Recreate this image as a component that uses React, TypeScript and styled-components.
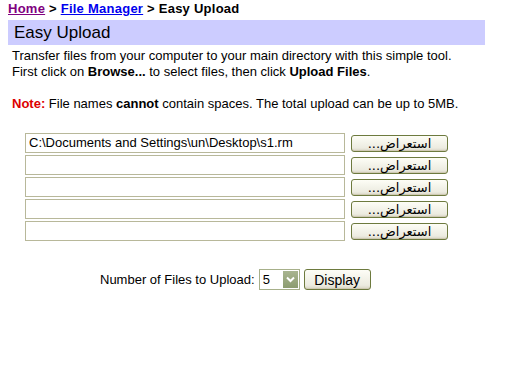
import React from "react";
import styled, { createGlobalStyle } from "styled-components";

const Global = createGlobalStyle`
  html, body { margin: 0; padding: 0; background: #fff; }
  body { font-family: "Liberation Sans", Arial, sans-serif; color: #000; }
`;

const Page = styled.div`
  width: 477px;
  padding: 0 8px;
`;

const Crumbs = styled.div`
  font-size: 13px;
  font-weight: bold;
  line-height: 18px;
  letter-spacing: 0.25px;
  color: #000;
`;

const Crumb = styled.a<{ $visited?: boolean }>`
  color: ${(p) => (p.$visited ? "#800080" : "#0000ee")};
  text-decoration: underline;
`;

const TitleBar = styled.h1`
  margin: 2px 0 0;
  background: #ccccff;
  font-size: 17px;
  font-weight: normal;
  line-height: 25px;
  padding: 0 6px;
`;

const Intro = styled.p`
  margin: 3px 0 0;
  padding-left: 4px;
  font-size: 13px;
  line-height: 16px;
`;

const NoteLine = styled(Intro)`
  margin-top: 16px;
`;

const Red = styled.b`
  color: #dd0000;
`;

const FileList = styled.div`
  margin: 21px 0 0 17px;
  display: flex;
  flex-direction: column;
  gap: 2px;
`;

const FileRow = styled.div`
  display: flex;
  align-items: center;
  gap: 6px;
`;

const PathBox = styled.div`
  width: 315px;
  height: 18px;
  border: 1px solid #b8b89a;
  font-size: 13px;
  line-height: 18px;
  padding-left: 3px;
  box-sizing: content-box;
  white-space: nowrap;
  overflow: hidden;
`;

const XpButton = styled.button`
  font-family: "Liberation Sans", Arial, "DejaVu Sans", sans-serif;
  background: linear-gradient(#fdfdf6, #ecebe0 80%, #d8d4c4);
  border: 1px solid #6d7a3e;
  border-radius: 3px;
  color: #000;
  padding: 0;
  margin: 0;
  box-shadow: inset 0 -1px 0 #cfcab4;
`;

const BrowseButton = styled(XpButton)`
  width: 97px;
  height: 17px;
  font-family: "DejaVu Sans", "Liberation Sans", sans-serif;
  font-size: 13px;
  line-height: 15px;
`;

const CountRow = styled.div`
  margin: 28px 0 0 92px;
  display: flex;
  align-items: center;
  font-size: 13px;
`;

const SelectBox = styled.div`
  margin-left: 4px;
  width: 36px;
  height: 19px;
  border: 1px solid #a7b08a;
  display: flex;
  align-items: center;
  justify-content: space-between;
  padding-left: 3px;
  font-size: 13px;
  box-sizing: content-box;
`;

const Arrow = styled.div`
  width: 15px;
  height: 17px;
  margin-right: 1px;
  background: linear-gradient(#a8b590, #8c9c70);
  display: flex;
  align-items: center;
  justify-content: center;
`;

const DisplayButton = styled(XpButton)`
  margin-left: 4px;
  width: 67px;
  height: 21px;
  font-size: 14px;
`;

const BROWSE = "استعراض...";

export default function App() {
  const files = ["C:\\Documents and Settings\\un\\Desktop\\s1.rm", "", "", "", ""];
  return (
    <>
      <Global />
      <Page>
        <Crumbs>
          <Crumb $visited href="#">Home</Crumb> &gt; <Crumb href="#">File Manager</Crumb> &gt; Easy Upload
        </Crumbs>
        <TitleBar>Easy Upload</TitleBar>
        <Intro>
          Transfer files from your computer to your main directory with this simple tool.
          <br />
          First click on <b>Browse...</b> to select files, then click <b>Upload Files</b>.
        </Intro>
        <NoteLine>
          <Red>Note:</Red> File names <b>cannot</b> contain spaces. The total upload can be up to 5MB.
        </NoteLine>
        <FileList>
          {files.map((f, i) => (
            <FileRow key={i}>
              <PathBox>{f}</PathBox>
              <BrowseButton dir="rtl">{BROWSE}</BrowseButton>
            </FileRow>
          ))}
        </FileList>
        <CountRow>
          Number of Files to Upload:
          <SelectBox>
            5
            <Arrow>
              <svg width="9" height="7" viewBox="0 0 9 7">
                <path d="M1 1.5 L4.5 5 L8 1.5" stroke="#fff" strokeWidth="2" fill="none" />
              </svg>
            </Arrow>
          </SelectBox>
          <DisplayButton>Display</DisplayButton>
        </CountRow>
      </Page>
    </>
  );
}
